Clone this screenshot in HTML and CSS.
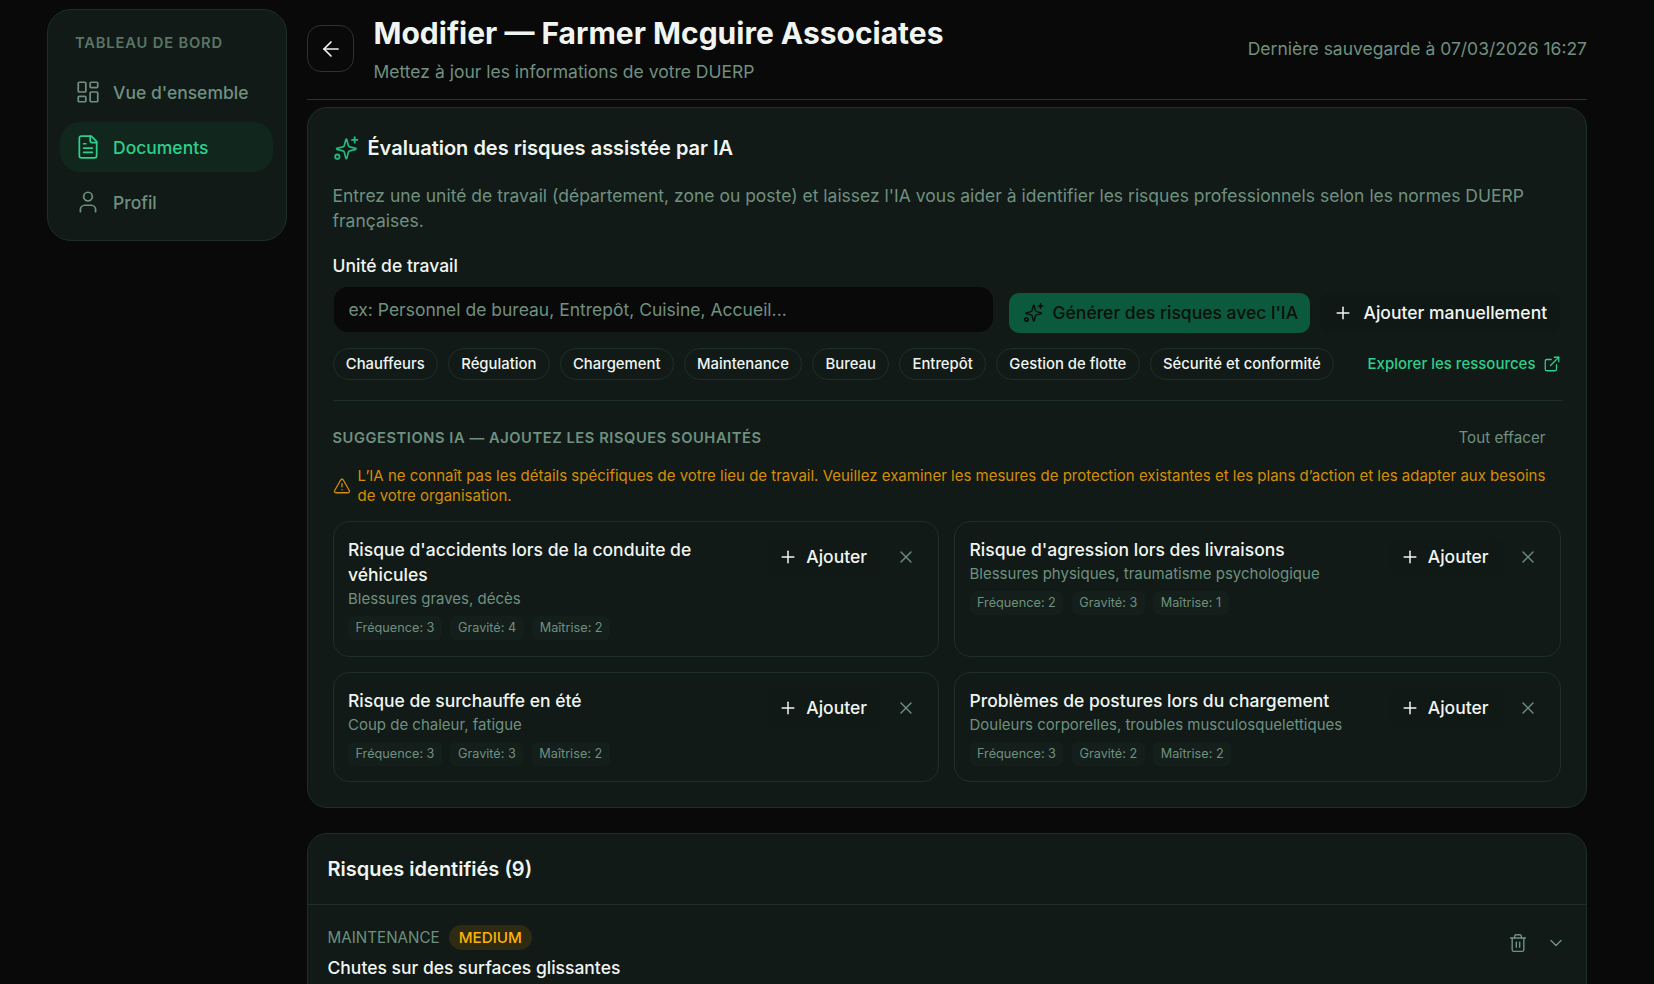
FILE: index.html
```html
<!DOCTYPE html>
<html lang="fr">
<head>
    <meta charset="UTF-8">
    <title>Modifier — Farmer Mcguire Associates</title>
    <link rel="stylesheet" href="styles.css">
</head>
<body>
    <aside class="sidebar">
        <div class="sidebar-title">TABLEAU DE BORD</div>
        <a class="nav-item">
            <svg class="nav-icon" viewBox="0 0 24 24"><rect x="3" y="3" width="7" height="9" rx="1"/><rect x="14" y="3" width="7" height="5" rx="1"/><rect x="14" y="12" width="7" height="9" rx="1"/><rect x="3" y="16" width="7" height="5" rx="1"/></svg>
            Vue d'ensemble
        </a>
        <a class="nav-item active">
            <svg class="nav-icon" viewBox="0 0 24 24"><path d="M15 2H6a2 2 0 0 0-2 2v16a2 2 0 0 0 2 2h12a2 2 0 0 0 2-2V7z"/><path d="M14 2v4a2 2 0 0 0 2 2h4"/><path d="M10 9H8"/><path d="M16 13H8"/><path d="M16 17H8"/></svg>
            Documents
        </a>
        <a class="nav-item">
            <svg class="nav-icon" viewBox="0 0 24 24"><circle cx="12" cy="7" r="4"/><path d="M19 21v-2a4 4 0 0 0-4-4H9a4 4 0 0 0-4 4v2"/></svg>
            Profil
        </a>
    </aside>

    <main class="main">
        <header class="page-header">
            <button class="back-btn">
                <svg viewBox="0 0 24 24"><path d="m12 19-7-7 7-7"/><path d="M19 12H5"/></svg>
            </button>
            <div class="page-titles">
                <h1>Modifier — Farmer Mcguire Associates</h1>
                <p>Mettez à jour les informations de votre DUERP</p>
            </div>
            <div class="saved">Dernière sauvegarde à 07/03/2026 16:27</div>
        </header>

        <section class="card ai-card">
            <h2 class="ai-title">
                <svg class="sparkle" viewBox="0 0 24 24"><path d="M9.94 15.5A2 2 0 0 0 8.5 14.06l-6.13-1.58a.5.5 0 0 1 0-.96L8.5 9.94A2 2 0 0 0 9.94 8.5l1.58-6.13a.5.5 0 0 1 .96 0L14.06 8.5A2 2 0 0 0 15.5 9.94l6.13 1.58a.5.5 0 0 1 0 .96L15.5 14.06a2 2 0 0 0-1.44 1.44l-1.58 6.13a.5.5 0 0 1-.96 0z" transform="translate(1.5 2) scale(.9)"/><path d="M20 2v5"/><path d="M22.5 4.5h-5"/><circle cx="4" cy="20" r="2"/></svg>
                Évaluation des risques assistée par IA
            </h2>
            <p class="ai-desc">Entrez une unité de travail (département, zone ou poste) et laissez l'IA vous aider à identifier les risques professionnels selon les normes DUERP françaises.</p>
            <label class="field-label">Unité de travail</label>
            <div class="input-row">
                <div class="fake-input">ex: Personnel de bureau, Entrepôt, Cuisine, Accueil...</div>
                <button class="btn-generate">
                    <svg class="sparkle" viewBox="0 0 24 24"><path d="M9.94 15.5A2 2 0 0 0 8.5 14.06l-6.13-1.58a.5.5 0 0 1 0-.96L8.5 9.94A2 2 0 0 0 9.94 8.5l1.58-6.13a.5.5 0 0 1 .96 0L14.06 8.5A2 2 0 0 0 15.5 9.94l6.13 1.58a.5.5 0 0 1 0 .96L15.5 14.06a2 2 0 0 0-1.44 1.44l-1.58 6.13a.5.5 0 0 1-.96 0z" transform="translate(1.5 2) scale(.9)"/><path d="M20 2v5"/><path d="M22.5 4.5h-5"/><circle cx="4" cy="20" r="2"/></svg>
                    Générer des risques avec l'IA
                </button>
                <button class="btn-ghost">
                    <svg class="plus" viewBox="0 0 24 24"><path d="M5 12h14"/><path d="M12 5v14"/></svg>
                    Ajouter manuellement
                </button>
            </div>
            <div class="chips-row">
                <span class="chip">Chauffeurs</span>
                <span class="chip">Régulation</span>
                <span class="chip">Chargement</span>
                <span class="chip">Maintenance</span>
                <span class="chip">Bureau</span>
                <span class="chip">Entrepôt</span>
                <span class="chip">Gestion de flotte</span>
                <span class="chip">Sécurité et conformité</span>
                <a class="explore">Explorer les ressources
                    <svg viewBox="0 0 24 24"><path d="M15 3h6v6"/><path d="M10 14 21 3"/><path d="M18 13v6a2 2 0 0 1-2 2H5a2 2 0 0 1-2-2V8a2 2 0 0 1 2-2h6"/></svg>
                </a>
            </div>

            <div class="suggest-head">
                <span class="suggest-label">SUGGESTIONS IA — AJOUTEZ LES RISQUES SOUHAITÉS</span>
                <span class="clear">Tout effacer</span>
            </div>
            <div class="warning">
                <svg viewBox="0 0 24 24"><path d="m21.73 18-8-14a2 2 0 0 0-3.48 0l-8 14A2 2 0 0 0 4 21h16a2 2 0 0 0 1.73-3"/><path d="M12 9v4"/><path d="M12 17h.01"/></svg>
                <span>L’IA ne connaît pas les détails spécifiques de votre lieu de travail. Veuillez examiner les mesures de protection existantes et les plans d’action et les adapter aux besoins de votre organisation.</span>
            </div>

            <div class="suggest-grid">
                <article class="suggest">
                    <div class="suggest-body">
                        <h3>Risque d'accidents lors de la conduite de véhicules</h3>
                        <p>Blessures graves, décès</p>
                        <div class="tags"><span>Fréquence: 3</span><span>Gravité: 4</span><span>Maîtrise: 2</span></div>
                    </div>
                    <button class="btn-add"><svg class="plus" viewBox="0 0 24 24"><path d="M5 12h14"/><path d="M12 5v14"/></svg>Ajouter</button>
                    <svg class="close" viewBox="0 0 24 24"><path d="M18 6 6 18"/><path d="m6 6 12 12"/></svg>
                </article>
                <article class="suggest">
                    <div class="suggest-body">
                        <h3>Risque d'agression lors des livraisons</h3>
                        <p>Blessures physiques, traumatisme psychologique</p>
                        <div class="tags"><span>Fréquence: 2</span><span>Gravité: 3</span><span>Maîtrise: 1</span></div>
                    </div>
                    <button class="btn-add"><svg class="plus" viewBox="0 0 24 24"><path d="M5 12h14"/><path d="M12 5v14"/></svg>Ajouter</button>
                    <svg class="close" viewBox="0 0 24 24"><path d="M18 6 6 18"/><path d="m6 6 12 12"/></svg>
                </article>
                <article class="suggest">
                    <div class="suggest-body">
                        <h3>Risque de surchauffe en été</h3>
                        <p>Coup de chaleur, fatigue</p>
                        <div class="tags"><span>Fréquence: 3</span><span>Gravité: 3</span><span>Maîtrise: 2</span></div>
                    </div>
                    <button class="btn-add"><svg class="plus" viewBox="0 0 24 24"><path d="M5 12h14"/><path d="M12 5v14"/></svg>Ajouter</button>
                    <svg class="close" viewBox="0 0 24 24"><path d="M18 6 6 18"/><path d="m6 6 12 12"/></svg>
                </article>
                <article class="suggest">
                    <div class="suggest-body">
                        <h3>Problèmes de postures lors du chargement</h3>
                        <p>Douleurs corporelles, troubles musculosquelettiques</p>
                        <div class="tags"><span>Fréquence: 3</span><span>Gravité: 2</span><span>Maîtrise: 2</span></div>
                    </div>
                    <button class="btn-add"><svg class="plus" viewBox="0 0 24 24"><path d="M5 12h14"/><path d="M12 5v14"/></svg>Ajouter</button>
                    <svg class="close" viewBox="0 0 24 24"><path d="M18 6 6 18"/><path d="m6 6 12 12"/></svg>
                </article>
            </div>
        </section>

        <section class="card risks-card">
            <h2 class="risks-title">Risques identifiés (9)</h2>
            <div class="risk-row">
                <div>
                    <div class="risk-meta"><span class="risk-cat">MAINTENANCE</span><span class="badge">MEDIUM</span></div>
                    <div class="risk-name">Chutes sur des surfaces glissantes</div>
                </div>
                <div class="risk-actions">
                    <svg viewBox="0 0 24 24"><path d="M10 11v6"/><path d="M14 11v6"/><path d="M19 6v14a2 2 0 0 1-2 2H7a2 2 0 0 1-2-2V6"/><path d="M3 6h18"/><path d="M8 6V4a2 2 0 0 1 2-2h4a2 2 0 0 1 2 2v2"/></svg>
                    <svg viewBox="0 0 24 24"><path d="m6 9 6 6 6-6"/></svg>
                </div>
            </div>
        </section>
    </main>
</body>
</html>
```

FILE: styles.css
```css
* { box-sizing: border-box; }

html, body {
    height: 984px;
    overflow: hidden;
}

body {
    margin: 0;
    padding: 0 67px 0 47px;
    display: flex;
    align-items: flex-start;
    gap: 20px;
    background: #090909;
    color: #f0f5f2;
    font-family: Inter, "Liberation Sans", sans-serif;
}

svg {
    fill: none;
    stroke: currentColor;
    stroke-width: 2;
    stroke-linecap: round;
    stroke-linejoin: round;
    flex-shrink: 0;
}

button {
    font-family: inherit;
    border: none;
    background: none;
    cursor: pointer;
}

/* sidebar */
.sidebar {
    width: 240px;
    height: 232px;
    flex-shrink: 0;
    margin-top: 9px;
    padding: 25px 13px 0 12px;
    background: #111a16;
    border: 1px solid #1e2f27;
    border-radius: 24px;
}

.sidebar-title {
    padding-left: 15px;
    margin-bottom: 15px;
    font-size: 14.7px;
    line-height: 17px;
    font-weight: 600;
    letter-spacing: 0.85px;
    color: #5a7567;
}

.nav-item {
    display: flex;
    align-items: center;
    gap: 12px;
    height: 50px;
    margin-bottom: 5px;
    padding-left: 15px;
    border-radius: 20px;
    font-size: 17.5px;
    font-weight: 500;
    color: #6f9080;
}

.nav-item.active {
    background: #11271e;
    color: #2dcf8c;
}

.nav-icon {
    width: 26px;
    height: 26px;
    stroke-width: 1.6;
}

/* header */
.main {
    width: 1280px;
    flex-shrink: 0;
}

.page-header {
    display: flex;
    align-items: flex-start;
    gap: 19.5px;
    height: 100px;
    border-bottom: 1px solid #26362e;
}

.back-btn {
    width: 47px;
    height: 47px;
    flex-shrink: 0;
    display: flex;
    align-items: center;
    justify-content: center;
    margin-top: 25px;
    border: 1px solid #26362e;
    border-radius: 14px;
    color: #f0f5f2;
}

.back-btn svg {
    width: 24px;
    height: 24px;
    stroke-width: 1.7;
}

.page-titles {
    flex: 1;
    padding-top: 15px;
}

.page-titles h1 {
    margin: 0;
    font-size: 30px;
    line-height: 36px;
    font-weight: 700;
    color: #f0f5f2;
}

.page-titles p {
    margin: 10px 0 0;
    font-size: 17.5px;
    line-height: 22px;
    color: #6f9080;
}

.saved {
    padding-top: 38px;
    font-size: 17.5px;
    line-height: 22px;
    color: #6f9080;
}

/* cards */
.card {
    background: #111a16;
    border: 1px solid #1e2f27;
    border-radius: 20px;
}

.ai-card {
    height: 701px;
    margin-top: 7px;
    padding: 26px 24.5px;
}

.ai-title {
    display: flex;
    align-items: center;
    gap: 9px;
    margin: 0;
    font-size: 20px;
    line-height: 28px;
    font-weight: 600;
}

.ai-title .sparkle {
    width: 26px;
    height: 26px;
    stroke-width: 1.7;
    color: #24b87c;
}

.ai-desc {
    margin: 21px 0 0;
    font-size: 17.5px;
    line-height: 25px;
    color: #6f9080;
}

.field-label {
    display: block;
    margin-top: 20px;
    font-size: 17.5px;
    line-height: 25px;
    font-weight: 500;
}

.input-row {
    display: flex;
    align-items: flex-start;
    margin-top: 8.5px;
}

.fake-input {
    width: 659px;
    height: 45px;
    flex-shrink: 0;
    margin-left: 1px;
    padding-left: 15px;
    display: flex;
    align-items: center;
    border-radius: 14px;
    background: #090909;
    font-size: 17.5px;
    color: #6f9080;
}

.btn-generate {
    display: flex;
    align-items: center;
    gap: 9px;
    width: 301px;
    height: 40px;
    flex-shrink: 0;
    margin: 6px 0 0 16px;
    padding: 0 0 0 14px;
    border-radius: 10px;
    background: #0b5a3e;
    font-size: 17.5px;
    font-weight: 500;
    color: #090f0c;
    white-space: nowrap;
}

.btn-generate .sparkle {
    width: 21px;
    height: 21px;
    stroke-width: 1.8;
}

.btn-ghost {
    display: flex;
    align-items: center;
    gap: 11px;
    width: 240px;
    height: 40px;
    flex-shrink: 0;
    margin: 6px 0 0 10px;
    padding: 0 0 0 13px;
    border-radius: 10px;
    background: #101815;
    font-size: 17.5px;
    font-weight: 500;
    color: #f0f5f2;
    white-space: nowrap;
}

.plus {
    width: 20px;
    height: 20px;
    stroke-width: 1.8;
}

.chips-row {
    display: flex;
    align-items: center;
    gap: 10px;
    margin-top: 15px;
    padding-bottom: 20px;
    border-bottom: 1px solid #1e2f27;
}

.chip {
    height: 32px;
    padding: 0 12.3px;
    display: flex;
    align-items: center;
    border: 1px solid #1e2f27;
    border-radius: 16px;
    font-size: 14.85px;
    font-weight: 500;
    white-space: nowrap;
}

.explore {
    display: flex;
    align-items: center;
    gap: 7px;
    margin: 0 1px 0 auto;
    font-size: 15px;
    font-weight: 500;
    color: #2dcf8c;
    white-space: nowrap;
}

.explore svg {
    width: 18px;
    height: 18px;
    stroke-width: 1.7;
}

.suggest-head {
    display: flex;
    justify-content: space-between;
    align-items: center;
    margin-top: 27px;
    padding-right: 16px;
    line-height: 20px;
}

.suggest-label {
    font-size: 14.7px;
    font-weight: 600;
    letter-spacing: 0.55px;
    color: #6f9080;
}

.clear {
    font-size: 15.2px;
    color: #6f9080;
}

.warning {
    display: flex;
    align-items: center;
    gap: 7px;
    margin-top: 18px;
    padding-right: 10px;
    font-size: 15px;
    line-height: 20px;
    color: #d48e0a;
}

.warning svg {
    width: 18px;
    height: 18px;
    stroke-width: 1.7;
}

.suggest-grid {
    display: grid;
    grid-template-columns: 606.5px 606.5px;
    grid-template-rows: 136px 110px;
    gap: 15px;
    margin-top: 15px;
}

.suggest {
    display: flex;
    align-items: flex-start;
    padding: 15px 15px 0 14.5px;
    border: 1px solid #1e2f27;
    border-radius: 16px;
}

.suggest-body { flex: 1; }

.suggest h3 {
    margin: 0;
    font-size: 17.5px;
    line-height: 25px;
    font-weight: 500;
}

.suggest p {
    margin: 0;
    font-size: 15px;
    line-height: 23px;
    color: #6f9080;
}

.tags {
    display: flex;
    gap: 8.5px;
    margin-top: 6px;
}

.tags span {
    padding: 0 7.5px;
    height: 24px;
    display: flex;
    align-items: center;
    border-radius: 6px;
    background: #141e1a;
    font-size: 12.7px;
    color: #6f9080;
}

.btn-add {
    display: flex;
    align-items: center;
    gap: 8px;
    height: 38px;
    margin: 1px 0 0 8px;
    padding: 0 14px 0 11px;
    border-radius: 10px;
    background: #111916;
    font-size: 17.5px;
    font-weight: 500;
    color: #f0f5f2;
}

.close {
    width: 20px;
    height: 20px;
    margin: 10px 7px 0 15px;
    stroke-width: 1.6;
    color: #6f9080;
}

/* risks */
.risks-card {
    height: 200px;
    margin-top: 25px;
}

.risks-title {
    margin: 0;
    height: 71px;
    padding: 0 19.5px;
    display: flex;
    align-items: center;
    border-bottom: 1px solid #1e2f27;
    font-size: 20px;
    font-weight: 600;
}

.risk-row {
    display: flex;
    justify-content: space-between;
    padding: 20px 20px 20px 19.5px;
}

.risk-meta {
    display: flex;
    align-items: center;
    gap: 9px;
}

.risk-cat {
    font-size: 15.2px;
    color: #6f9080;
}

.badge {
    height: 25px;
    padding: 0 10px;
    display: flex;
    align-items: center;
    border-radius: 13px;
    background: #2f2a12;
    font-size: 15.2px;
    font-weight: 500;
    color: #fbb30a;
}

.risk-name {
    margin-top: 5px;
    font-size: 17.5px;
    line-height: 25px;
    font-weight: 500;
}

.risk-actions {
    display: flex;
    align-items: center;
    gap: 18px;
    height: 35px;
    color: #6f9080;
}

.risk-actions svg {
    width: 20px;
    height: 20px;
    stroke-width: 1.7;
}
```
